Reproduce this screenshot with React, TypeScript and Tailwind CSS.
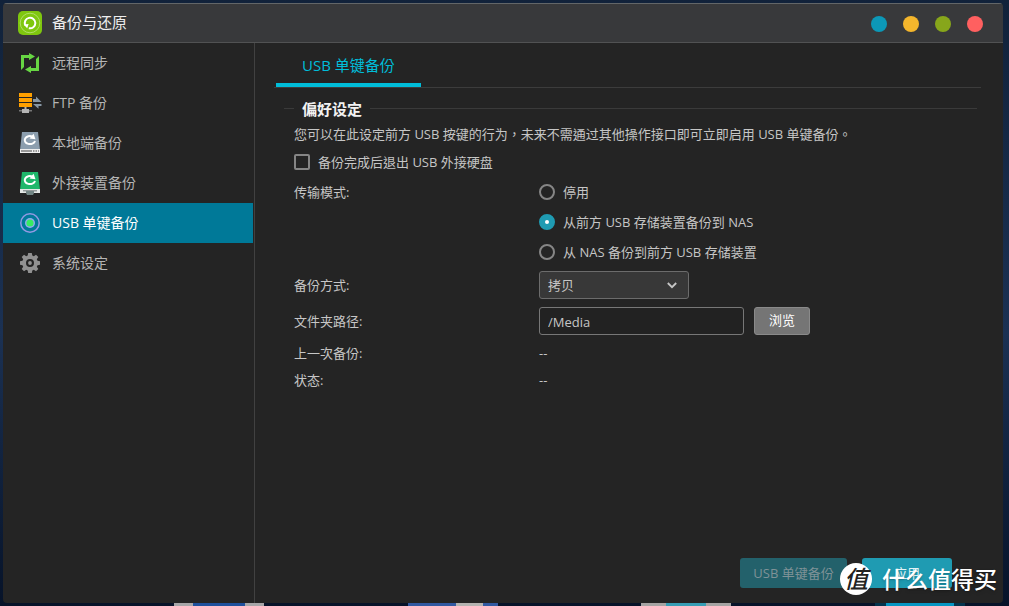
import { useState } from 'react';
import type { ReactNode } from 'react';

type NavItem = { id: string; label: string; icon: ReactNode };

function AppIcon() {
  return (
    <svg width="24" height="24" viewBox="0 0 24 24" fill="none" aria-hidden="true">
      <rect width="24" height="24" rx="5" fill="#7fc70f" />
      <circle cx="12" cy="12" r="9.8" stroke="#b4e070" strokeWidth="0.9" />
      <path d="M7.3 14.4A5.300 5.300 0 1 1 10.800 17.200" stroke="#fff" strokeWidth="2" />
      <path d="M5.600 13.500l5-.6-1.400 4.300z" fill="#fff" />
    </svg>
  );
}

function SyncIcon() {
  return (
    <svg width="20" height="20" viewBox="0 0 20 20" fill="#67d643" aria-hidden="true">
      <path d="M1 2h8V0l6 3.500L9 7V5H4v9l-3 3z" />
      <path d="M19 18h-8v2l-6-3.500 6-3.500v2h5V6l3-3z" />
    </svg>
  );
}

function FtpIcon() {
  return (
    <svg width="24" height="20" viewBox="0 0 24 20" aria-hidden="true">
      <path d="M1 0h13v4H1zM1 5h13v4H1zM1 10h13v4H1z" fill="#ffa000" />
      <path d="M1 17h13v1.500H1z" fill="#777" />
      <path d="M6.500 14h2v2H11v4H4v-4h2.500z" fill="#b5b5b5" />
      <path d="M15 6h3V3.500L23.500 9H15zM23.500 13h-3v2.800L15 11h8.500z" fill="#8797a5" />
    </svg>
  );
}

function RotateArrow() {
  return (
    <>
      <path d="M15 9A5.200 4 0 1 1 12.500 4.600" fill="none" stroke="#fff" strokeWidth="2" />
      <path d="M13.600 1.800l1.900 5.400-6-.6z" fill="#fff" />
    </>
  );
}

function LocalDiskIcon() {
  return (
    <svg width="20" height="22" viewBox="0 0 20 22" aria-hidden="true">
      <path d="M2 0h16l2 18H0z" fill="#8c9eae" />
      <path d="M0 17h20v4H0z" fill="#eee" />
      <path d="M1 18.500h11v1H1zM13 18.500h1.500v1H13zM15.500 18.500H17v1h-1.500zM18 18.500h1v1h-1z" fill="#444" />
      <RotateArrow />
    </svg>
  );
}

function ExternalDiskIcon() {
  return (
    <svg width="20" height="23" viewBox="0 0 20 23" aria-hidden="true">
      <path d="M2 0h16l2 18H0z" fill="#1fb76b" />
      <path d="M0 17h20v4H0z" fill="#e4e8e6" />
      <path d="M3 18h14v1.500H3z" fill="#949b9b" />
      <path d="M6 19h8v2l-1 2H7l-1-2z" fill="#738685" />
      <RotateArrow />
    </svg>
  );
}

function UsbKeyIcon() {
  return (
    <svg width="20" height="20" viewBox="0 0 20 20" aria-hidden="true">
      <circle cx="10" cy="10" r="9.200" fill="none" stroke="#9299e3" strokeWidth="1.500" />
      <circle cx="10" cy="10" r="5" fill="#93a9f1" />
      <circle cx="10" cy="10" r="3.600" fill="#37eb61" />
    </svg>
  );
}

function GearIcon() {
  return (
    <svg width="20" height="20" viewBox="0 0 20 20" fill="#929292" aria-hidden="true">
      <path
        fillRule="evenodd"
        d="M8.200 0h3.600l.5 2.500 1.500.7L16 1.700 18.300 4l-1.500 2.200.7 1.500 2.500.5v3.600l-2.500.5-.7 1.500 1.500 2.200-2.300 2.300-2.200-1.500-1.500.7-.5 2.500H8.200l-.5-2.500-1.500-.7L4 18.300 1.700 16l1.500-2.200-.7-1.500L0 11.800V8.200l2.500-.5.7-1.500L1.700 4 4 1.700l2.200 1.500 1.500-.7zM10 6a4 4 0 1 0 0 8 4 4 0 0 0 0-8z"
      />
      <circle cx="10" cy="10" r="1.900" />
    </svg>
  );
}

const NAV: NavItem[] = [
  { id: 'remote', label: '远程同步', icon: <SyncIcon /> },
  { id: 'ftp', label: 'FTP 备份', icon: <FtpIcon /> },
  { id: 'local', label: '本地端备份', icon: <LocalDiskIcon /> },
  { id: 'external', label: '外接装置备份', icon: <ExternalDiskIcon /> },
  { id: 'usb', label: 'USB 单键备份', icon: <UsbKeyIcon /> },
  { id: 'system', label: '系统设定', icon: <GearIcon /> },
];

const MODES = [
  { id: 'off', label: '停用' },
  { id: 'toNas', label: '从前方 USB 存储装置备份到 NAS' },
  { id: 'toUsb', label: '从 NAS 备份到前方 USB 存储装置' },
];

const WINDOW_BUTTONS = [
  { label: '说明', color: 'bg-[#0c98b7]' },
  { label: '最小化', color: 'bg-[#f4b62c]' },
  { label: '最大化', color: 'bg-[#87a61b]' },
  { label: '关闭', color: 'bg-[#ff6060]' },
];

// Desktop icons behind the window; only their top edge shows under it
function DesktopIcons() {
  return (
    <div className="absolute inset-x-0 bottom-0 h-[3px] overflow-hidden" aria-hidden="true">
      <div className="absolute left-[174px] h-[3px] w-[90px] bg-[#a6a6a8]">
        <div className="mx-auto h-full w-[52px] bg-[#1e509c]" />
      </div>
      <div className="absolute left-[408px] flex h-[3px] w-[90px] bg-[#3159a1]">
        <div className="ml-12 h-full w-[27px] bg-[#b4b3b0]" />
      </div>
      <div className="absolute left-[641px] h-[3px] w-[90px] bg-[#a5a4a3]">
        <div className="mx-auto h-full w-10 bg-[#379eb5]" />
      </div>
      <div className="absolute left-[875px] h-[3px] w-[90px] bg-[#04344d]">
        <div className="mx-auto h-full w-[68px] bg-[#0696c3]" />
      </div>
    </div>
  );
}

export default function App() {
  const [active, setActive] = useState('usb');
  const [eject, setEject] = useState(false);
  const [mode, setMode] = useState('toNas');
  const [method, setMethod] = useState('copy');
  const [path, setPath] = useState('/Media');

  return (
    <div
      lang="zh-Hant"
      className="relative h-screen bg-linear-to-b from-[#11223a] via-[#1b3153] via-55% to-[#071329] pt-[3px] pr-1.5 pb-[3px] pl-[3px] font-['Open_Sans','Noto_Sans_CJK_TC',sans-serif] text-[13px] text-[#c6c6c6]"
    >
      <DesktopIcons />
      <div className="relative flex h-full flex-col overflow-hidden rounded-sm bg-[#242424]">
        <header className="flex h-10 shrink-0 items-center border-t border-b border-t-[#626668] border-b-[#515253] bg-[#38393b] pr-5 pl-[15px]">
          <AppIcon />
          <h1 className="ml-[10px] pb-0.5 text-[15px] text-[#eeeeee]">备份与还原</h1>
          <div className="ml-auto flex gap-4 pt-0.5">
            {WINDOW_BUTTONS.map(b => (
              <button key={b.label} type="button" aria-label={b.label} className={`size-4 rounded-full ${b.color}`} />
            ))}
          </div>
        </header>

        <div className="flex min-h-0 flex-1">
          <nav className="w-[252px] shrink-0 border-r border-[#414141] pr-px">
            {NAV.map(item => (
              <button
                key={item.id}
                type="button"
                onClick={() => setActive(item.id)}
                className={`flex h-10 w-full items-center pl-[15px] text-left text-[14px] ${
                  active === item.id ? 'bg-[#007998] text-white' : 'text-[#b5b5b5]'
                }`}
              >
                <span className="flex w-6 justify-center">{item.icon}</span>
                <span className="ml-[10px] pb-0.5">{item.label}</span>
              </button>
            ))}
          </nav>

          <main className="flex min-w-0 flex-1 flex-col pr-[22px] pb-[15px] pl-[19px]">
            <div className="flex h-[45px] shrink-0 border-b border-[#3c3c3c] pl-0.5">
              <button type="button" className="h-11 border-b-4 border-[#00bdd9] px-[26px] pt-1 text-[15px] text-[#00bdd9]">
                USB 单键备份
              </button>
            </div>

            <section className="pt-2 pr-1 pl-[10px]">
              <h2 className="flex h-6 items-center gap-2 text-[15px] font-bold text-[#f2f2f2]">
                <span className="h-px w-[10px] bg-[#3a3a3a]" />
                <span className="pt-0.5">偏好设定</span>
                <span className="h-px flex-1 bg-[#3a3a3a]" />
              </h2>

              <div className="pl-[10px]">
                <p className="flex h-[27px] items-center pt-0.5">
                  您可以在此设定前方 USB 按键的行为，未来不需通过其他操作接口即可立即启用 USB 单键备份。
                </p>
                <label className="flex h-[30px] items-center gap-2">
                  <input
                    type="checkbox"
                    checked={eject}
                    onChange={e => setEject(e.target.checked)}
                    className="size-4 appearance-none rounded-xs border-2 border-[#858585] checked:bg-[#1f9bb2]"
                  />
                  <span className="pt-0.5">备份完成后退出 USB 外接硬盘</span>
                </label>

                <div className="grid grid-cols-[245px_1fr]">
                  <span id="mode-label" className="flex h-[30px] items-center pt-0.5">传输模式:</span>
                  <div role="radiogroup" aria-labelledby="mode-label">
                    {MODES.map(m => (
                      <label key={m.id} className="flex h-[30px] items-center gap-2">
                        <input
                          type="radio"
                          name="mode"
                          checked={mode === m.id}
                          onChange={() => setMode(m.id)}
                          className="size-4 appearance-none rounded-full border-2 border-[#858585] checked:border-6 checked:border-[#1f9bb2] checked:bg-white"
                        />
                        <span className="pt-0.5">{m.label}</span>
                      </label>
                    ))}
                  </div>

                  <label htmlFor="method" className="flex h-9 items-center pt-0.5">备份方式:</label>
                  <div className="flex h-9 items-center">
                    <div className="relative">
                      <select
                        id="method"
                        value={method}
                        onChange={e => setMethod(e.target.value)}
                        className="h-7 w-[150px] appearance-none rounded-[3px] border border-[#6c6c6c] bg-[#383838] px-2 pt-0.5"
                      >
                        <option value="copy">拷贝</option>
                        <option value="sync">同步</option>
                      </select>
                      <svg
                        className="pointer-events-none absolute top-[11px] right-3"
                        width="10"
                        height="7"
                        viewBox="0 0 10 7"
                        fill="none"
                        aria-hidden="true"
                      >
                        <path d="M0.800 1L5 5.200 9.200 1" stroke="#c6c6c6" strokeWidth="1.800" />
                      </svg>
                    </div>
                  </div>

                  <label htmlFor="path" className="flex h-9 items-center pt-0.5">文件夹路径:</label>
                  <div className="flex h-9 items-center gap-[10px]">
                    <input
                      id="path"
                      type="text"
                      value={path}
                      onChange={e => setPath(e.target.value)}
                      className="h-7 w-[205px] rounded-[3px] border border-[#777777] bg-[#222222] px-2 pt-0.5"
                    />
                    <button type="button" className="h-7 w-14 rounded-[3px] border border-[#8a8a8a] bg-[#757575] text-white">
                      浏览
                    </button>
                  </div>

                  <span className="flex h-[27px] items-center pt-0.5">上一次备份:</span>
                  <span className="flex h-[27px] items-center pt-0.5">--</span>
                  <span className="flex h-[27px] items-center pt-0.5">状态:</span>
                  <span className="flex h-[27px] items-center pt-0.5">--</span>
                </div>
              </div>
            </section>

            <footer className="mt-auto flex justify-end gap-[15px] pr-[29px]">
              <button type="button" disabled className="h-[30px] w-[107px] rounded-[3px] bg-[#23616b] pt-0.5 text-[#7f9297]">
                USB 单键备份
              </button>
              <button type="button" className="h-[30px] w-[90px] rounded-[3px] bg-[#1f9bb2] pt-0.5 text-[#e2f3f6]">
                应用
              </button>
            </footer>
          </main>
        </div>
      </div>

      {/* Site watermark, lies over the apply button */}
      <div className="pointer-events-none absolute right-3 bottom-[11px] flex items-center gap-[10px] text-white">
        <span className="flex size-8 items-center justify-center rounded-full bg-white text-[24px] leading-8 font-medium text-[#222222] italic">
          值
        </span>
        <span className="text-[23px] leading-8 font-medium text-shadow-md">什么值得买</span>
      </div>
    </div>
  );
}
